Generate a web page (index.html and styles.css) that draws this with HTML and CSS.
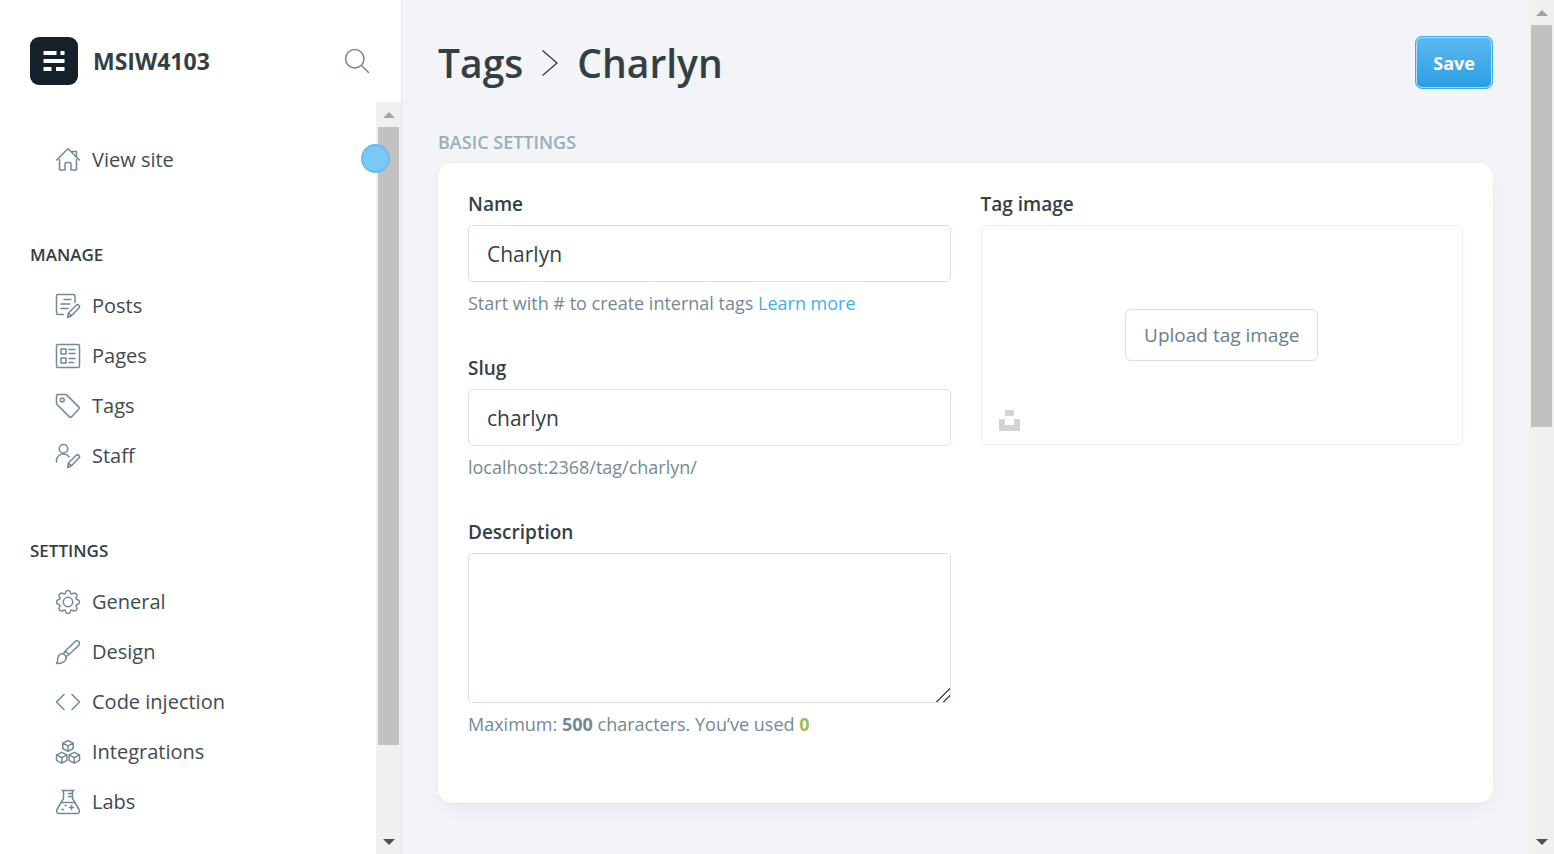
FILE: index.html
```html
<!DOCTYPE html>
<html lang="en">
<head>
<meta charset="utf-8">
<meta name="viewport" content="width=device-width, initial-scale=1">
<title>Tags - Charlyn</title>
<link rel="stylesheet" href="styles.css">
</head>
<body>
<div class="app">
  <aside class="sidebar">
    <header class="brand">
      <svg class="brand-logo" viewBox="0 0 48 48" aria-hidden="true">
        <rect width="48" height="48" rx="9" fill="#15212a"/>
        <path fill="#fff" d="M13.500 14h13v4h-13zM30.500 14h4v4h-4zM13.500 22h21v4h-21zM13.500 30h8v4h-8zM26 30h8.500v4H26z"/>
      </svg>
      <span class="brand-name">MSIW4103</span>
      <button class="search" type="button" aria-label="Search">
        <svg class="icon" viewBox="0 0 24 24"><circle cx="9.800" cy="9.800" r="9.200"/><path d="M16.500 16.500l7 7"/></svg>
      </button>
    </header>
    <div class="sidebar-body">
      <nav class="nav">
        <ul class="nav-list">
          <li><a class="nav-link" href="#"><svg class="icon" viewBox="0 0 24 24"><path d="M.500 12 12 .800l11.500 11.200M3.500 11.500v10.500h5.500v-6q0-1.500 1.500-1.500h3q1.500 0 1.500 1.500v6h5.500V11.500M15.500 3.500h5V9"/></svg>View site</a></li>
        </ul>
        <h2 class="nav-title">MANAGE</h2>
        <ul class="nav-list">
          <li><a class="nav-link" href="#"><svg class="icon" viewBox="0 0 24 24"><path d="M7.500 20.500H2Q.500 20.500.500 19V2Q.500.500 2 .500h15.500Q19 .500 19 2v6.500M8 5.500h7M5 10h9M5 14.500h7"/><path d="M11.500 23.500l1-4.500 7.700-7.700a1.900 1.900 0 0 1 2.700 2.700l-7.400 7.700zM12.500 19l3 2.700"/></svg>Posts</a></li>
          <li><a class="nav-link" href="#"><svg class="icon" viewBox="0 0 24 24"><rect x=".500" y=".500" width="23" height="23" rx="1.500"/><path d="M5 5h5v5H5zM5 14h5v5H5zM13 5.500h6M13 9.500h6M13 14.500h6M13 18.500h4.500"/></svg>Pages</a></li>
          <li><a class="nav-link" href="#"><svg class="icon" viewBox="0 0 24 24"><path d="M.500 2Q.500.500 2 .500h7.500q.800 0 1.400.600l12 12q1 1 0 2l-7.400 7.800q-1 1-2 0L1.200 10.700Q.500 10 .500 9z"/><circle cx="6.300" cy="6" r="1.900"/></svg>Tags</a></li>
          <li><a class="nav-link" href="#"><svg class="icon" viewBox="0 0 24 24"><circle cx="7.500" cy="4.800" r="4.300"/><path d="M.500 18v-1a7 7 0 0 1 12.500-4.300M11.500 23.500l1-4.500 7.700-7.700a1.900 1.900 0 0 1 2.700 2.700l-7.400 7.700zM12.500 19l3 2.700"/></svg>Staff</a></li>
        </ul>
        <h2 class="nav-title">SETTINGS</h2>
        <ul class="nav-list">
          <li><a class="nav-link" href="#"><svg class="icon" viewBox="0 0 24 24"><circle cx="12" cy="12" r="4.700"/><path d="M9.700 2.200c.300-2.200 4.300-2.200 4.600 0 .300 1.900 1.500 2.400 3 1.200 1.800-1.400 4.700 1.500 3.300 3.300-1.200 1.500-.700 2.700 1.200 3 2.200.300 2.200 4.300 0 4.600-1.900.300-2.400 1.500-1.200 3 1.400 1.800-1.500 4.700-3.300 3.300-1.500-1.200-2.700-.700-3 1.200-.300 2.200-4.300 2.200-4.600 0-.300-1.900-1.500-2.400-3-1.200-1.800 1.400-4.700-1.500-3.300-3.300 1.200-1.500.700-2.700-1.200-3-2.200-.300-2.200-4.300 0-4.600 1.900-.300 2.400-1.500 1.200-3-1.400-1.800 1.500-4.700 3.300-3.300 1.500 1.200 2.700.700 3-1.200z"/></svg>General</a></li>
          <li><a class="nav-link" href="#"><svg class="icon" viewBox="0 0 24 24"><path d="M.500 23.500c1.500-1.500.800-3.500 1.300-5.700.900-4.200 4.700-5.200 7-3 2.500 2.500 1.400 6-1.800 7.500-2 1-4.300 1.200-6.500 1.200zM7.500 13.700 9.300 11l3.700 3.500-3.300 2.300M9.300 11l9.500-9.300q1.800-1.700 3.700-.300 1.900 1.800.200 4L13 14.500"/></svg>Design</a></li>
          <li><a class="nav-link" href="#"><svg class="icon" viewBox="0 0 24 24"><path d="M8 4.500.500 12 8 19.500M16 4.500l7.500 7.500-7.500 7.500"/></svg>Code injection</a></li>
          <li><a class="nav-link" href="#"><svg class="icon" viewBox="0 0 24 24"><path d="m12 .500 5.200 2.600v5.400L12 11.300 6.800 8.500V3.100zM6.800 3.100 12 5.800l5.200-2.700M12 5.800v5.500M5.800 12.300l5.100 2.600v5.400l-5.100 2.900-5.300-2.900v-5.400zM.500 14.900l5.300 2.700 5.100-2.700M5.800 17.600v5.600M18.200 12.300l5.300 2.600v5.400l-5.300 2.900-5.100-2.900v-5.400zM13.100 14.900l5.100 2.700 5.300-2.700M18.200 17.600v5.600"/></svg>Integrations</a></li>
          <li><a class="nav-link" href="#"><svg class="icon" viewBox="0 0 24 24"><path d="M6 .500h12M7.500.500V8.500L1 19.500q-1.500 4 2 4h18q3.500 0 2-4L16.500 8.500V.500M12.500 3.500h4M12.500 6.500h4M4.800 12.500h14.400M15.500 15.500v4M13.500 17.500h4M9 15.500h1M6 19.500h1.500"/></svg>Labs</a></li>
        </ul>
      </nav>
      <div class="scrollbar" aria-hidden="true">
        <span class="scroll-arrow up"></span>
        <div class="scroll-track"><div class="scroll-thumb thumb-sidebar"></div></div>
        <span class="scroll-arrow down"></span>
        <span class="pointer"></span>
      </div>
    </div>
  </aside>

  <main class="main">
    <header class="page-header">
      <h1 class="page-title">
        <a href="#">Tags</a>
        <svg class="chevron" viewBox="0 0 16 26" aria-hidden="true"><path d="M.500.500 15 13 .500 25.500"/></svg>
        <span>Charlyn</span>
      </h1>
      <button class="save" type="button">Save</button>
    </header>
    <h2 class="section-title">BASIC SETTINGS</h2>
    <form class="card">
      <div class="column">
        <div class="field">
          <label for="tag-name">Name</label>
          <input class="control" id="tag-name" type="text" value="Charlyn">
          <p class="help">Start with # to create internal tags <a href="#">Learn more</a></p>
        </div>
        <div class="field">
          <label for="tag-slug">Slug</label>
          <input class="control" id="tag-slug" type="text" value="charlyn">
          <p class="help">localhost:2368/tag/charlyn/</p>
        </div>
        <div class="field">
          <label for="tag-description">Description</label>
          <textarea class="control description" id="tag-description"></textarea>
          <p class="help">Maximum: <b>500</b> characters. You’ve used <b class="count">0</b></p>
        </div>
      </div>
      <div class="column">
        <div class="field">
          <label for="tag-upload">Tag image</label>
          <div class="uploader">
            <button class="upload" id="tag-upload" type="button">Upload tag image</button>
            <button class="unsplash" type="button" aria-label="Unsplash">
              <svg viewBox="0 0 21 21"><path d="M6 0h9v6H6zM0 9h6v6h9V9h6v12H0z"/></svg>
            </button>
          </div>
        </div>
      </div>
    </form>
  </main>

  <div class="scrollbar" aria-hidden="true">
    <span class="scroll-arrow up"></span>
    <div class="scroll-track"><div class="scroll-thumb thumb-page"></div></div>
    <span class="scroll-arrow down"></span>
  </div>
</div>
</body>
</html>
```
FILE: styles.css
```css
* {
  box-sizing: border-box;
}

body {
  margin: 0;
  color: #343f44;
  background: #f2f4f8;
  font-family: "Open Sans", "Noto Sans", sans-serif;
  font-size: 18px;
  line-height: 24px;
}

h1, h2, p, ul {
  margin: 0;
  padding: 0;
}

a {
  color: inherit;
  text-decoration: none;
}

button, input, textarea {
  font: inherit;
  color: inherit;
}

.app {
  display: flex;
  height: 100vh;
  overflow: hidden;
}

/* Sidebar */
.sidebar {
  display: flex;
  flex-direction: column;
  flex: 0 0 402px;
  background: #fff;
  border-right: 1px solid #e3e6ef;
}

.brand {
  display: flex;
  align-items: center;
  gap: 15px;
  padding: 37px 32px 17px 30px;
}

.brand-logo {
  width: 48px;
  height: 48px;
}

.brand-name {
  flex: 1;
  font-size: 23px;
  font-weight: 700;
}

.search {
  display: flex;
  padding: 0;
  border: 0;
  background: none;
}

.icon {
  flex: none;
  width: 24px;
  height: 24px;
  fill: none;
  stroke: #738a94;
  stroke-width: 1.5;
  stroke-linejoin: round;
  stroke-linecap: round;
  overflow: visible;
}

.sidebar-body {
  display: flex;
  flex: 1;
  min-height: 0;
}

.nav {
  flex: 1;
  padding: 33px 0 0 30px;
  overflow: hidden;
}

.nav-list {
  list-style: none;
}

.nav-link {
  display: flex;
  align-items: center;
  gap: 12px;
  height: 50px;
  padding-left: 26px;
  color: #3f4b51;
  font-size: 20px;
}

.nav-title {
  margin: 58px 0 14px;
  font-size: 17px;
  font-weight: 600;
}

/* Scrollbars */
.scrollbar {
  position: relative;
  display: flex;
  flex-direction: column;
  flex: 0 0 25px;
  background: #f0f0f0;
}

.scroll-arrow {
  flex: 0 0 25px;
  display: flex;
  align-items: center;
  justify-content: center;
}

.scroll-arrow::before {
  content: "";
  border: 6px solid transparent;
}

.scroll-arrow.up::before {
  border-top: 0;
  border-bottom-color: #a3a3a3;
}

.scroll-arrow.down::before {
  border-bottom: 0;
  border-top-color: #505050;
}

.scroll-track {
  flex: 1;
  padding: 0 2px;
}

.scroll-thumb {
  background: #c1c1c1;
}

.thumb-sidebar {
  height: 88%;
}

.thumb-page {
  height: 50%;
}

.pointer {
  position: absolute;
  top: 42px;
  left: -15px;
  width: 29px;
  height: 29px;
  border: 2px solid #67bdee;
  border-radius: 50%;
  background: #7cc8f5;
}

/* Page */
.main {
  flex: 1;
  min-width: 0;
  padding: 36px 36px 0;
  overflow: hidden;
}

.page-header {
  display: flex;
  align-items: center;
  justify-content: space-between;
}

.page-title {
  display: flex;
  align-items: center;
  gap: 19px;
  font-size: 39px;
  font-weight: 600;
  line-height: 52px;
}

.chevron {
  width: 16px;
  height: 26px;
  fill: none;
  stroke: #2b3338;
  stroke-width: 1.2;
}

.save {
  height: 53px;
  padding: 0 17px;
  border: 1px solid #3eaaec;
  border-radius: 7px;
  background: linear-gradient(#5bb9f1, #2a9fe3);
  box-shadow: inset 0 0 0 1px #b9e0f8;
  color: #fff;
  font-weight: 700;
}

.section-title {
  margin: 41px 0 9px;
  color: #9baeb8;
  font-size: 18px;
  font-weight: 600;
}

.card {
  display: grid;
  grid-template-columns: 1fr 1fr;
  gap: 30px;
  padding: 29px 30px 26px;
  border-radius: 14px;
  background: #fff;
  box-shadow: 0 0 1px rgba(0, 0, 0, 0.12), 0 8px 20px -8px rgba(0, 0, 0, 0.1);
}

.field {
  display: flex;
  flex-direction: column;
  gap: 9px;
  margin-bottom: 41px;
}

.field label {
  font-size: 19px;
  font-weight: 600;
}

.control {
  width: 100%;
  height: 57px;
  padding: 0 18px;
  border: 1px solid #d5e3ea;
  border-radius: 5px;
  outline: 0;
  background: #fff;
  font-size: 21px;
}

.description {
  height: 150px;
  resize: vertical;
}

.description::-webkit-resizer {
  background: linear-gradient(135deg, transparent 0 53%, #555 53% 58%, transparent 58% 76%, #555 76% 81%, transparent 81%);
}

.help {
  color: #738a94;
  font-size: 18px;
}

.help a {
  color: #3eb0ef;
}

.help .count {
  color: #9fbb58;
}

.uploader {
  position: relative;
  display: flex;
  align-items: center;
  justify-content: center;
  height: 220px;
  border: 1px solid #e5eff5;
  border-radius: 5px;
}

.upload {
  height: 52px;
  padding: 0 18px;
  border: 1px solid #d3e0e6;
  border-radius: 6px;
  background: #fff;
  color: #667f89;
  font-size: 19px;
}

.unsplash {
  position: absolute;
  bottom: 13px;
  left: 17px;
  display: flex;
  padding: 0;
  border: 0;
  background: none;
}

.unsplash svg {
  width: 21px;
  height: 21px;
  fill: #d4d4d4;
}
```
